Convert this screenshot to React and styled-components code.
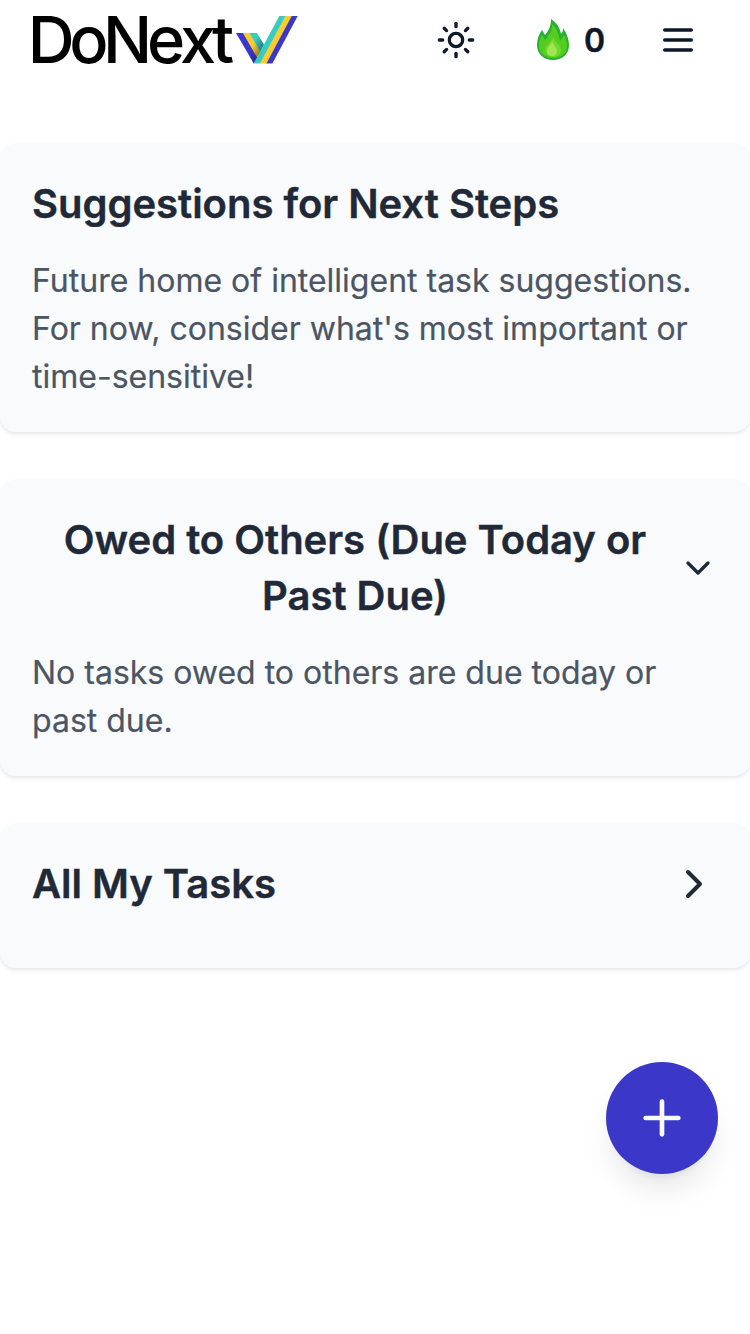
import React from "react";
import styled, { createGlobalStyle } from "styled-components";
import { Sun, Plus, ChevronDown, ChevronRight } from "lucide-react";

const GlobalStyle = createGlobalStyle`
  *, *::before, *::after { box-sizing: border-box; }
  html, body { margin: 0; background: #fff; }
  body { font-family: Inter, "Liberation Sans", sans-serif; color: #0f172a; }
  h2, p { margin: 0; }
  button { font: inherit; color: inherit; border: 0; padding: 0; background: none; cursor: pointer; }
  svg { display: block; flex-shrink: 0; }
`;

const Page = styled.div`
  display: flex;
  flex-direction: column;
  min-height: 1334px;
`;

const Header = styled.header`
  display: flex;
  align-items: center;
  justify-content: space-between;
  height: 80px;
  padding: 0 32px 0 16px;
`;

const Actions = styled.nav`
  display: flex;
  align-items: center;
`;

const IconButton = styled.button`
  display: grid;
  place-items: center;
  width: 80px;
  height: 80px;
`;

const Streak = styled.div`
  display: flex;
  align-items: center;
  gap: 15px;
  margin: 0 33px 0 41px;
  font-size: 32px;
  line-height: 48px;
  font-weight: 600;
`;

const StreakCount = styled.span`
  padding-top: 2px;
  -webkit-text-stroke: 0.4px currentColor;
`;

const Sections = styled.main`
  display: flex;
  flex-direction: column;
  gap: 48px;
  padding-top: 64px;
`;

const Card = styled.section`
  display: flex;
  flex-direction: column;
  gap: 24px;
  padding: 32px;
  border-radius: 16px;
  background: #f9fafc;
  box-shadow: 0 2px 4px rgba(0, 0, 0, 0.1);
  padding-bottom: ${({ $collapsed }) => ($collapsed ? 56 : 32)}px;
`;

const CardHeader = styled.div`
  display: flex;
  align-items: center;
  justify-content: space-between;
  color: #1f2937;
`;

const Title = styled.h2`
  flex: 1;
  font-size: 40px;
  line-height: 56px;
  font-weight: 600;
  letter-spacing: -0.02px;
  -webkit-text-stroke: 0.4px currentColor;
  text-align: ${({ $align }) => $align || "left"};
`;

const Text = styled.p`
  padding-top: 1px;
  margin-bottom: -1px;
  font-size: 32px;
  line-height: 48px;
  color: #4b5563;
  -webkit-text-stroke: 0.2px currentColor;
`;

const AddButton = styled.button`
  position: fixed;
  right: 32px;
  top: 1062px;
  display: grid;
  place-items: center;
  width: 112px;
  height: 112px;
  border-radius: 50%;
  && { background: #3b38c9; color: #f8fafc; }
  box-shadow: 0 20px 30px -6px rgba(0, 0, 0, 0.1), 0 8px 12px -8px rgba(0, 0, 0, 0.1);
`;

function Logo() {
  return (
    <svg width="284" height="80" viewBox="16 0 284 80" role="img" aria-label="DoNext">
      <defs>
        <linearGradient id="fold" gradientUnits="userSpaceOnUse" x1="250" y1="50.500" x2="258.500" y2="55">
          <stop offset="0" stopColor="#10204a" stopOpacity="0" />
          <stop offset="1" stopColor="#10204a" stopOpacity="0.45" />
        </linearGradient>
      </defs>
      <text x="27.7 69.2 103 147 180 212" y="63" fontFamily="Inter, sans-serif" fontSize="65" fontWeight="500" fill="#000">
        DoNext
      </text>
      <path d="M236 33H243.500L257.500 57.400 253.800 63.500z" fill="#3b38c9" />
      <path d="M243 33H250L260.700 51.600 257.100 57.600z" fill="#fdcb2e" />
      <path d="M249.500 33H257L264 44.800 260.300 51.800z" fill="#38cbbf" />
      <path d="M236 33H257L264 44.800 253.800 63.500z" fill="url(#fold)" />
      <path d="M279.3 16h6.5l-25.4 47.5h-6.7z" fill="#38cbbf" />
      <path d="M285.5 16h6.5l-25.4 47.5h-6.5z" fill="#fdcb2e" />
      <path d="M291.7 16h6l-25.3 47.5h-6z" fill="#3b38c9" />
    </svg>
  );
}

function Flame() {
  return (
    <svg width="32" height="42" viewBox="537 19 32 42" aria-hidden="true">
      <path d="M551 19c6 4 9 9 10 15 2-2 2-4 2-6 3 4 6 11 6 17 0 9-7 15-16 15s-16-6-16-15c0-6 2-11 5-15l3 5c4-5 6-9 6-16z" fill="#27b034" />
      <path d="M552.500 24c4 4 6.500 10 7.500 17l4-6c2 4 3 7 3 11 0 8-6 12-14 12s-14-5-14-12c0-4 1-8 3-11l3 5c4-5 7-9 7.500-16z" fill="#54cc20" />
      <path d="M553 36c1 7 8 8 8 14 0 5-4 7-8 7s-8-3-8-7c0-5 7-7 8-14z" fill="#70d92b" />
      <path d="M552 41c1 4 5 6 5 10 0 3-2 5-5 5s-5-2-5-5c0-4 4-6 5-10z" fill="#a0e553" />
    </svg>
  );
}

function MenuLines() {
  return (
    <svg width="40" height="40" viewBox="0 0 24 24" stroke="currentColor" strokeWidth="2" strokeLinecap="round">
      <path d="M4 6h16M4 12h16M4 18h16" />
    </svg>
  );
}

export default function App() {
  return (
    <>
      <GlobalStyle />
      <Page>
        <Header>
          <Logo />
          <Actions>
            <IconButton aria-label="Toggle theme"><Sun size={40} /></IconButton>
            <Streak><Flame /><StreakCount>0</StreakCount></Streak>
            <IconButton aria-label="Open menu"><MenuLines /></IconButton>
          </Actions>
        </Header>
        <Sections>
          <Card>
            <CardHeader><Title>Suggestions for Next Steps</Title></CardHeader>
            <Text>
              Future home of intelligent task suggestions. For now, consider what's most important or time-sensitive!
            </Text>
          </Card>
          <Card>
            <CardHeader>
              <Title $align="center">Owed to Others (Due Today or Past Due)</Title>
              <ChevronDown size={40} />
            </CardHeader>
            <Text>No tasks owed to others are due today or past due.</Text>
          </Card>
          <Card $collapsed>
            <CardHeader>
              <Title>All My Tasks</Title>
              <ChevronRight size={48} />
            </CardHeader>
          </Card>
        </Sections>
        <AddButton aria-label="Add task"><Plus size={56} /></AddButton>
      </Page>
    </>
  );
}
